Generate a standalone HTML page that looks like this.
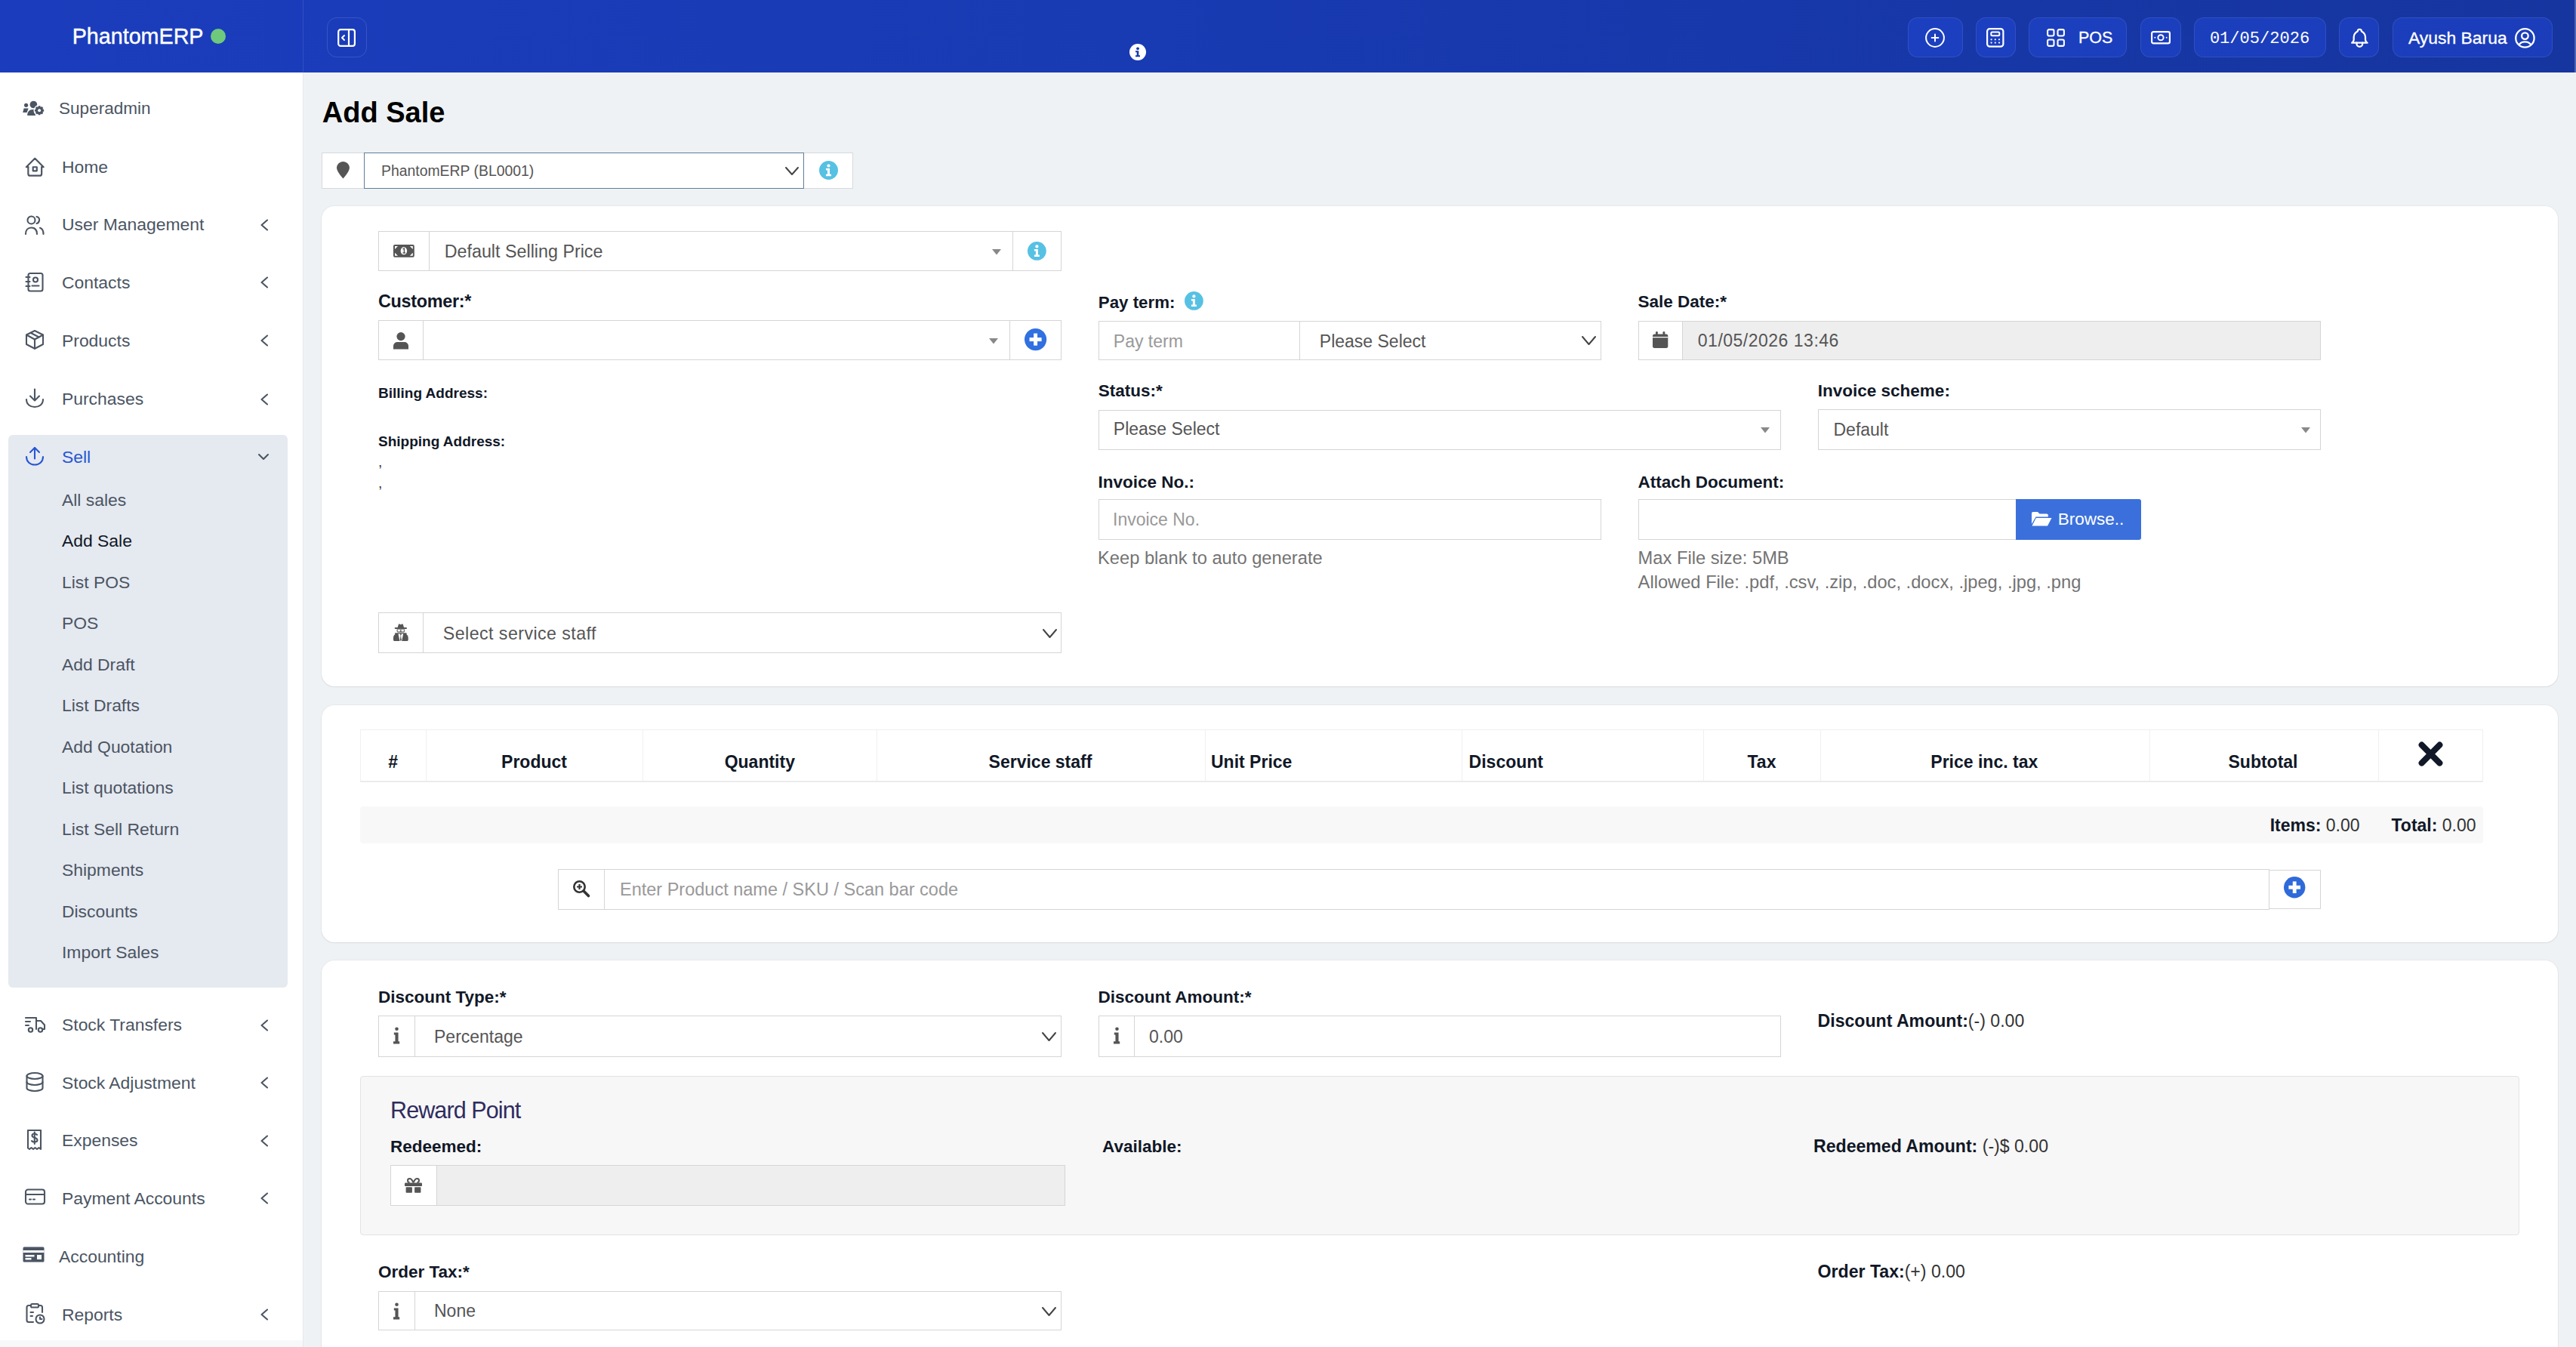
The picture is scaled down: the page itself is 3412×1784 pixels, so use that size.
<!DOCTYPE html><html><head><meta charset="utf-8"><title>Add Sale</title><style>
html,body{margin:0;padding:0;}
@media (max-width:2000px){html{zoom:0.5;}}
body{width:3412px;height:1784px;overflow:hidden;position:relative;background:#eff2f4;font-family:"Liberation Sans",sans-serif;}
.r,.t{position:absolute;}
.t{white-space:nowrap;}
svg.r{overflow:visible;}
</style></head><body>
<div class="r" style="left:0.0px;top:0.0px;width:3412.0px;height:96.0px;background:linear-gradient(90deg,#1b3dbd 0%,#183ab2 45%,#16359f 100%);"></div>
<div class="r" style="left:3410.0px;top:0.0px;width:2.0px;height:96.0px;background:#4e66b3;"></div>
<div class="r" style="left:401.0px;top:0.0px;width:1.0px;height:96.0px;background:rgba(255,255,255,0.10);"></div>
<div class="t" style="left:95.7px;top:33.6px;font-size:28.7px;line-height:28.7px;font-weight:normal;color:#fff;-webkit-text-stroke:0.4px #fff;">PhantomERP</div>
<svg class="r" style="left:278.6px;top:38.0px;" width="20.0" height="20.0" viewBox="0 0 20.0 20"><circle cx="10" cy="10" r="10" fill="#6ec97c"/></svg>
<div class="r" style="left:433.0px;top:22.5px;width:53.0px;height:53.2px;border:1.5px solid rgba(255,255,255,0.13);border-radius:13px;box-sizing:border-box;"></div>
<svg class="r" style="left:446.6px;top:37.7px;" width="24.1" height="24.1" viewBox="0 0 24.099999999999966 24.099999999999994"><rect x="1.2" y="1.2" width="21.7" height="21.7" rx="3" fill="none" stroke="#fff" stroke-width="2.2"/><line x1="15" y1="1.5" x2="15" y2="22.5" stroke="#fff" stroke-width="2.2"/><polyline points="9,9 6,12 9,15" fill="none" stroke="#fff" stroke-width="2" stroke-linecap="round" stroke-linejoin="round"/></svg>
<svg class="r" style="left:1495.5px;top:57.5px;" width="22.0" height="22.0" viewBox="0 0 22.0 22.0"><circle cx="11" cy="11" r="11" fill="#fff"/><circle cx="11" cy="6.3" r="1.9" fill="#173aae"/><path d="M8 9.2 H12.3 V15.2 H14 V17.3 H8 V15.2 H9.7 V11.2 H8 Z" fill="#173aae"/></svg>
<div class="r" style="left:2527.0px;top:23.0px;width:73.0px;height:52.7px;background:rgba(35,75,225,0.42);border:1.5px solid rgba(255,255,255,0.09);border-radius:13px;box-sizing:border-box;"></div>
<div class="r" style="left:2617.0px;top:23.0px;width:53.0px;height:52.7px;background:rgba(35,75,225,0.42);border:1.5px solid rgba(255,255,255,0.09);border-radius:13px;box-sizing:border-box;"></div>
<div class="r" style="left:2687.0px;top:23.0px;width:130.0px;height:52.7px;background:rgba(35,75,225,0.42);border:1.5px solid rgba(255,255,255,0.09);border-radius:13px;box-sizing:border-box;"></div>
<div class="r" style="left:2835.0px;top:23.0px;width:54.0px;height:52.7px;background:rgba(35,75,225,0.42);border:1.5px solid rgba(255,255,255,0.09);border-radius:13px;box-sizing:border-box;"></div>
<div class="r" style="left:2906.0px;top:23.0px;width:175.0px;height:52.7px;background:rgba(35,75,225,0.42);border:1.5px solid rgba(255,255,255,0.09);border-radius:13px;box-sizing:border-box;"></div>
<div class="r" style="left:3098.0px;top:23.0px;width:53.0px;height:52.7px;background:rgba(35,75,225,0.42);border:1.5px solid rgba(255,255,255,0.09);border-radius:13px;box-sizing:border-box;"></div>
<div class="r" style="left:3169.0px;top:23.0px;width:212.0px;height:52.7px;background:rgba(35,75,225,0.42);border:1.5px solid rgba(255,255,255,0.09);border-radius:13px;box-sizing:border-box;"></div>
<svg class="r" style="left:2550.0px;top:37.0px;" width="26.0" height="26.0" viewBox="0 0 26 26"><circle cx="13" cy="13" r="11.9" fill="none" stroke="#fff" stroke-width="2"/><line x1="13" y1="8.6" x2="13" y2="17.4" stroke="#fff" stroke-width="2" stroke-linecap="round"/><line x1="8.6" y1="13" x2="17.4" y2="13" stroke="#fff" stroke-width="2" stroke-linecap="round"/></svg>
<svg class="r" style="left:2631.0px;top:36.9px;" width="23.5" height="25.8" viewBox="0 0 23.5 25.800000000000004"><rect x="1.1" y="1.1" width="21.3" height="23.6" rx="3.5" fill="none" stroke="#fff" stroke-width="2.2"/><rect x="6.3" y="5.6" width="11" height="4.6" rx="1.5" fill="none" stroke="#fff" stroke-width="2"/><g fill="#fff"><circle cx="6.6" cy="15.3" r="1.1"/><circle cx="11.8" cy="15.3" r="1.1"/><circle cx="17" cy="15.3" r="1.1"/><circle cx="6.6" cy="19.6" r="1.1"/><circle cx="11.8" cy="19.6" r="1.1"/><circle cx="17" cy="19.6" r="1.1"/></g></svg>
<svg class="r" style="left:2711.0px;top:38.0px;" width="24.0" height="24.0" viewBox="0 0 24 24"><g fill="none" stroke="#fff" stroke-width="2.1"><rect x="1.1" y="1.1" width="8.4" height="8.4" rx="2"/><rect x="14.5" y="1.1" width="8.4" height="8.4" rx="2"/><rect x="1.1" y="14.5" width="8.4" height="8.4" rx="2"/><rect x="14.5" y="14.5" width="8.4" height="8.4" rx="2"/></g></svg>
<div class="t" style="left:2752.9px;top:39.7px;font-size:21.5px;line-height:21.5px;font-weight:normal;color:#fff;-webkit-text-stroke:0.3px #fff;">POS</div>
<svg class="r" style="left:2849.0px;top:41.2px;" width="26.0" height="17.5" viewBox="0 0 26 17.5"><rect x="1.1" y="1.1" width="23.8" height="15.3" rx="2.2" fill="none" stroke="#fff" stroke-width="2.2"/><circle cx="13" cy="8.75" r="3.6" fill="none" stroke="#fff" stroke-width="2"/><circle cx="5.3" cy="8.75" r="1" fill="#fff"/><circle cx="20.7" cy="8.75" r="1" fill="#fff"/></svg>
<div class="t" style="left:2926.9px;top:41.0px;font-size:22.06px;line-height:22.06px;font-weight:normal;color:#fff;font-family:'Liberation Mono',monospace;font-family:'Liberation Mono',monospace;">01/05/2026</div>
<svg class="r" style="left:3109.7px;top:34.6px" width="30.7" height="30.7" viewBox="0 0 24 24" fill="none" stroke="#fff" stroke-width="1.75" stroke-linecap="round" stroke-linejoin="round"><path d="M10 5a2 2 0 1 1 4 0a7 7 0 0 1 4 6v3a4 4 0 0 0 2 3h-16a4 4 0 0 0 2 -3v-3a7 7 0 0 1 4 -6"/><path d="M9 17v1a3 3 0 0 0 6 0v-1"/></svg>
<div class="t" style="left:3190.0px;top:38.5px;font-size:22.9px;line-height:22.9px;font-weight:normal;color:#fff;-webkit-text-stroke:0.3px #fff;">Ayush Barua</div>
<svg class="r" style="left:3331.4px;top:36.6px;" width="26.8" height="26.8" viewBox="0 0 26.799999999999727 26.799999999999997"><circle cx="13.4" cy="13.4" r="12.2" fill="none" stroke="#fff" stroke-width="2.3"/><circle cx="13.4" cy="10.6" r="4.3" fill="none" stroke="#fff" stroke-width="2.3"/><path d="M5.5 22.2 C7.5 19.3 10 18.3 13.4 18.3 C16.8 18.3 19.3 19.3 21.3 22.2" fill="none" stroke="#fff" stroke-width="2.3"/></svg>
<div class="r" style="left:0.0px;top:96.0px;width:401.0px;height:1688.0px;background:#fff;"></div>
<div class="r" style="left:401.0px;top:96.0px;width:1.0px;height:1688.0px;background:#e6e9ee;"></div>
<div class="r" style="left:0.0px;top:1775.0px;width:401.0px;height:9.0px;background:#f7f8fa;"></div>
<svg class="r" style="left:25px;top:125px" width="40" height="35" viewBox="0 0 40 35"><g fill="#4b5563"><circle cx="9.6" cy="14.3" r="2.6"/><path d="M6.6 18.4 H12.7 L10.6 23.9 H5.2 Z"/><circle cx="19.4" cy="13.5" r="4.8"/><path d="M11.2 27.9 C11.2 22.8 14 20 18.5 20 C20.5 20 22 20.5 23 21.3 L22 27.9 Z"/></g><circle cx="27.1" cy="21.3" r="7.6" fill="#fff"/><path d="M31.86 19.78 L33.15 19.94 L33.15 22.66 L31.86 22.82 L31.72 23.21 L31.54 23.59 L32.34 24.62 L30.42 26.54 L29.39 25.74 L29.01 25.92 L28.62 26.06 L28.46 27.35 L25.74 27.35 L25.58 26.06 L25.19 25.92 L24.81 25.74 L23.78 26.54 L21.86 24.62 L22.66 23.59 L22.48 23.21 L22.34 22.82 L21.05 22.66 L21.05 19.94 L22.34 19.78 L22.48 19.39 L22.66 19.01 L21.86 17.98 L23.78 16.06 L24.81 16.86 L25.19 16.68 L25.58 16.54 L25.74 15.25 L28.46 15.25 L28.62 16.54 L29.01 16.68 L29.39 16.86 L30.42 16.06 L32.34 17.98 L31.54 19.01 L31.72 19.39 Z" fill="#4b5563"/><circle cx="27.1" cy="21.3" r="2" fill="#fff"/></svg>
<div class="t" style="left:78.1px;top:132.8px;font-size:22.5px;line-height:22.5px;font-weight:normal;color:#4b5563;">Superadmin</div>
<svg class="r" style="left:30.8px;top:205.6px" width="30.5" height="30.5" viewBox="0 0 24 24" fill="none" stroke="#4b5563" stroke-width="1.7" stroke-linecap="round" stroke-linejoin="round"><path d="M5 12l-2 0l9 -9l9 9l-2 0"/><path d="M5 12v7a2 2 0 0 0 2 2h10a2 2 0 0 0 2 -2v-7"/><path d="M10 12h4v4h-4z"/></svg>
<div class="t" style="left:82.0px;top:209.6px;font-size:22.9px;line-height:22.9px;font-weight:normal;color:#4b5563;">Home</div>
<div class="t" style="left:82.0px;top:286.3px;font-size:22.9px;line-height:22.9px;font-weight:normal;color:#4b5563;">User Management</div>
<svg class="r" style="left:32px;top:284.7px" width="28" height="28" viewBox="0 0 28 28" fill="none" stroke="#4b5563" stroke-width="2.1" stroke-linecap="round" stroke-linejoin="round"><circle cx="9.5" cy="6.5" r="5"/><path d="M2 25 C2 19.5 5 16.5 9.5 16.5 C14 16.5 17 19.5 17 25"/><path d="M16.5 2 C19.5 2.5 20.5 5 20 7 C19.7 9 18.5 10.5 16.5 11"/><path d="M21 16.8 C24 17.8 25.5 20.5 25.5 25"/></svg>
<svg class="r" style="left:343.0px;top:289.7px;" width="14.0" height="16.0" viewBox="0 0 14 16.0"><polyline points="11,1.5 3.5,8 11,14.5" fill="none" stroke="#4b5563" stroke-width="2.1" stroke-linecap="round" stroke-linejoin="round"/></svg>
<div class="t" style="left:82.0px;top:362.8px;font-size:22.9px;line-height:22.9px;font-weight:normal;color:#4b5563;">Contacts</div>
<svg class="r" style="left:32px;top:360.2px" width="28" height="28" viewBox="0 0 28 28" fill="none" stroke="#4b5563" stroke-width="2.1" stroke-linecap="round" stroke-linejoin="round"><rect x="5.5" y="2" width="19" height="23.5" rx="2.5"/><circle cx="15" cy="10.5" r="3"/><path d="M10.5 18.5 H19.5"/><path d="M2.5 7 H7.5 M2.5 13 H7.5 M2.5 19 H7.5"/></svg>
<svg class="r" style="left:343.0px;top:366.2px;" width="14.0" height="16.0" viewBox="0 0 14 16.0"><polyline points="11,1.5 3.5,8 11,14.5" fill="none" stroke="#4b5563" stroke-width="2.1" stroke-linecap="round" stroke-linejoin="round"/></svg>
<div class="t" style="left:82.0px;top:440.0px;font-size:22.9px;line-height:22.9px;font-weight:normal;color:#4b5563;">Products</div>
<svg class="r" style="left:32px;top:436.4px" width="28" height="28" viewBox="0 0 28 28" fill="none" stroke="#4b5563" stroke-width="2.1" stroke-linecap="round" stroke-linejoin="round"><path d="M14 2 L25 7.5 V20 L14 25.8 L3 20 V7.5 Z"/><path d="M3 7.5 L14 13.5 L25 7.5"/><path d="M14 13.5 V25.8"/><path d="M8.5 4.8 L19.5 10.5"/></svg>
<svg class="r" style="left:343.0px;top:443.4px;" width="14.0" height="16.0" viewBox="0 0 14 16.0"><polyline points="11,1.5 3.5,8 11,14.5" fill="none" stroke="#4b5563" stroke-width="2.1" stroke-linecap="round" stroke-linejoin="round"/></svg>
<div class="t" style="left:82.0px;top:517.2px;font-size:22.9px;line-height:22.9px;font-weight:normal;color:#4b5563;">Purchases</div>
<svg class="r" style="left:32px;top:512.6px" width="28" height="28" viewBox="0 0 28 28" fill="none" stroke="#4b5563" stroke-width="2.1" stroke-linecap="round" stroke-linejoin="round"><path d="M14 2.5 V17"/><path d="M8 11.5 L14 17.5 L20 11.5"/><path d="M3 16 C3 22.5 8 26 14 26 C20 26 25 22.5 25 16"/></svg>
<svg class="r" style="left:343.0px;top:520.6px;" width="14.0" height="16.0" viewBox="0 0 14 16.0"><polyline points="11,1.5 3.5,8 11,14.5" fill="none" stroke="#4b5563" stroke-width="2.1" stroke-linecap="round" stroke-linejoin="round"/></svg>
<div class="r" style="left:11.0px;top:576.0px;width:370.0px;height:732.0px;background:#e5e9f0;border-radius:6px;"></div>
<div class="t" style="left:82.0px;top:594.1px;font-size:22.9px;line-height:22.9px;font-weight:normal;color:#2556d4;">Sell</div>
<svg class="r" style="left:32px;top:589.5px" width="28" height="28" viewBox="0 0 28 28" fill="none" stroke="#2556d4" stroke-width="2.1" stroke-linecap="round" stroke-linejoin="round"><path d="M14 17.5 V3"/><path d="M8 9 L14 3 L20 9"/><path d="M3 15 C3 21.5 8 25.5 14 25.5 C20 25.5 25 21.5 25 15"/></svg>
<svg class="r" style="left:341.0px;top:599.0px;" width="16.0" height="12.0" viewBox="0 0 16 12"><polyline points="2,3 8,9 14,3" fill="none" stroke="#4b5563" stroke-width="2.1" stroke-linecap="round" stroke-linejoin="round"/></svg>
<div class="t" style="left:82.0px;top:650.9px;font-size:22.9px;line-height:22.9px;font-weight:normal;color:#4b5563;">All sales</div>
<div class="t" style="left:82.0px;top:705.4px;font-size:22.9px;line-height:22.9px;font-weight:normal;color:#111827;">Add Sale</div>
<div class="t" style="left:82.0px;top:759.8px;font-size:22.9px;line-height:22.9px;font-weight:normal;color:#4b5563;">List POS</div>
<div class="t" style="left:82.0px;top:814.3px;font-size:22.9px;line-height:22.9px;font-weight:normal;color:#4b5563;">POS</div>
<div class="t" style="left:82.0px;top:868.8px;font-size:22.9px;line-height:22.9px;font-weight:normal;color:#4b5563;">Add Draft</div>
<div class="t" style="left:82.0px;top:923.2px;font-size:22.9px;line-height:22.9px;font-weight:normal;color:#4b5563;">List Drafts</div>
<div class="t" style="left:82.0px;top:977.7px;font-size:22.9px;line-height:22.9px;font-weight:normal;color:#4b5563;">Add Quotation</div>
<div class="t" style="left:82.0px;top:1032.1px;font-size:22.9px;line-height:22.9px;font-weight:normal;color:#4b5563;">List quotations</div>
<div class="t" style="left:82.0px;top:1086.6px;font-size:22.9px;line-height:22.9px;font-weight:normal;color:#4b5563;">List Sell Return</div>
<div class="t" style="left:82.0px;top:1141.1px;font-size:22.9px;line-height:22.9px;font-weight:normal;color:#4b5563;">Shipments</div>
<div class="t" style="left:82.0px;top:1195.5px;font-size:22.9px;line-height:22.9px;font-weight:normal;color:#4b5563;">Discounts</div>
<div class="t" style="left:82.0px;top:1250.0px;font-size:22.9px;line-height:22.9px;font-weight:normal;color:#4b5563;">Import Sales</div>
<div class="t" style="left:82.0px;top:1346.2px;font-size:22.9px;line-height:22.9px;font-weight:normal;color:#4b5563;">Stock Transfers</div>
<svg class="r" style="left:32px;top:1342.6px" width="30" height="28" viewBox="0 0 30 28" fill="none" stroke="#4b5563" stroke-width="2.1" stroke-linecap="round" stroke-linejoin="round"><path d="M2 5 H16 V20"/><path d="M16 9 H22 L27 14.5 V20 H25"/><circle cx="8.5" cy="21" r="2.7"/><circle cx="21.5" cy="21" r="2.7"/><path d="M2 10 H8 M2 15 H6"/></svg>
<svg class="r" style="left:343.0px;top:1349.6px;" width="14.0" height="16.0" viewBox="0 0 14 16.0"><polyline points="11,1.5 3.5,8 11,14.5" fill="none" stroke="#4b5563" stroke-width="2.1" stroke-linecap="round" stroke-linejoin="round"/></svg>
<div class="t" style="left:82.0px;top:1422.5px;font-size:22.9px;line-height:22.9px;font-weight:normal;color:#4b5563;">Stock Adjustment</div>
<svg class="r" style="left:32px;top:1418.9px" width="28" height="28" viewBox="0 0 28 28" fill="none" stroke="#4b5563" stroke-width="2.1" stroke-linecap="round" stroke-linejoin="round"><ellipse cx="14" cy="6" rx="10.5" ry="4"/><path d="M3.5 6 V22 C3.5 24.2 8.2 26 14 26 C19.8 26 24.5 24.2 24.5 22 V6"/><path d="M3.5 14 C3.5 16.2 8.2 18 14 18 C19.8 18 24.5 16.2 24.5 14"/></svg>
<svg class="r" style="left:343.0px;top:1425.9px;" width="14.0" height="16.0" viewBox="0 0 14 16.0"><polyline points="11,1.5 3.5,8 11,14.5" fill="none" stroke="#4b5563" stroke-width="2.1" stroke-linecap="round" stroke-linejoin="round"/></svg>
<div class="t" style="left:82.0px;top:1499.2px;font-size:22.9px;line-height:22.9px;font-weight:normal;color:#4b5563;">Expenses</div>
<svg class="r" style="left:32px;top:1494.6px" width="28" height="30" viewBox="0 0 28 30" fill="none" stroke="#4b5563" stroke-width="2.1" stroke-linecap="round" stroke-linejoin="round"><path d="M5 2 H22 V27 L19.5 25 L17 27 L14.5 25 L12 27 L9.5 25 L7 27 L5 25.5 Z"/><path d="M17 8 C16 6.8 15 6.5 13.5 6.5 C11.5 6.5 10.5 7.7 10.5 9 C10.5 12.5 17.5 11 17.5 15 C17.5 16.5 16 17.5 13.5 17.5 C12 17.5 10.8 17 10 16"/><path d="M13.8 4.5 V20"/></svg>
<svg class="r" style="left:343.0px;top:1502.6px;" width="14.0" height="16.0" viewBox="0 0 14 16.0"><polyline points="11,1.5 3.5,8 11,14.5" fill="none" stroke="#4b5563" stroke-width="2.1" stroke-linecap="round" stroke-linejoin="round"/></svg>
<div class="t" style="left:82.0px;top:1575.9px;font-size:22.9px;line-height:22.9px;font-weight:normal;color:#4b5563;">Payment Accounts</div>
<svg class="r" style="left:32px;top:1573.3px" width="30" height="26" viewBox="0 0 30 26" fill="none" stroke="#4b5563" stroke-width="2.1" stroke-linecap="round" stroke-linejoin="round"><rect x="2" y="2.5" width="25" height="19" rx="3"/><path d="M2 9 H27"/><path d="M7 15.5 H9 M12 15.5 H14"/></svg>
<svg class="r" style="left:343.0px;top:1579.3px;" width="14.0" height="16.0" viewBox="0 0 14 16.0"><polyline points="11,1.5 3.5,8 11,14.5" fill="none" stroke="#4b5563" stroke-width="2.1" stroke-linecap="round" stroke-linejoin="round"/></svg>
<svg class="r" style="left:30px;top:1650.5px" width="30" height="22" viewBox="0 0 30 22"><rect x="0.5" y="0.5" width="28" height="20" rx="1.5" fill="#4b5563"/><rect x="0.5" y="5" width="28" height="3" fill="#fff"/><rect x="3.5" y="11" width="12" height="2.5" fill="#fff"/><rect x="3.5" y="15" width="8" height="2.5" fill="#fff"/><rect x="19" y="11" width="6" height="6" fill="#fff"/></svg>
<div class="t" style="left:78.0px;top:1653.1px;font-size:22.9px;line-height:22.9px;font-weight:normal;color:#4b5563;">Accounting</div>
<div class="t" style="left:82.0px;top:1729.8px;font-size:22.9px;line-height:22.9px;font-weight:normal;color:#4b5563;">Reports</div>
<svg class="r" style="left:32px;top:1725.2px" width="30" height="30" viewBox="0 0 30 30" fill="none" stroke="#4b5563" stroke-width="2.1" stroke-linecap="round" stroke-linejoin="round"><path d="M9 4 H6 C4.5 4 3.5 5 3.5 6.5 V23.5 C3.5 25 4.5 26 6 26 H12"/><path d="M19 4 H21.5 C23 4 24 5 24 6.5 V13"/><rect x="9" y="2" width="10" height="4.5" rx="1.5"/><path d="M8.5 13 H12 M8.5 18 H11"/><circle cx="21" cy="22" r="5.5"/><path d="M21 19.5 V22 H23.5"/></svg>
<svg class="r" style="left:343.0px;top:1733.2px;" width="14.0" height="16.0" viewBox="0 0 14 16.0"><polyline points="11,1.5 3.5,8 11,14.5" fill="none" stroke="#4b5563" stroke-width="2.1" stroke-linecap="round" stroke-linejoin="round"/></svg>
<div class="t" style="left:426.8px;top:129.8px;font-size:38px;line-height:38px;font-weight:bold;color:#000;">Add Sale</div>
<div class="r" style="left:426.0px;top:202.0px;width:57.0px;height:47.5px;background:#fff;border:1px solid #d6d9dd;box-sizing:border-box;"></div>
<div class="r" style="left:1064.0px;top:202.0px;width:65.5px;height:47.5px;background:#fff;border:1px solid #d6d9dd;box-sizing:border-box;"></div>
<div class="r" style="left:482.0px;top:202.0px;width:583.0px;height:47.5px;background:#fff;border:1px solid #5f7f9b;box-sizing:border-box;"></div>
<svg class="r" style="left:445.7px;top:213.5px;" width="16.9" height="22.5" viewBox="0 0 16.900000000000034 22.5"><path d="M8.45 0 C3.8 0 0 3.7 0 8.3 C0 12.5 6 20 8.45 22.5 C10.9 20 16.9 12.5 16.9 8.3 C16.9 3.7 13.1 0 8.45 0 Z" fill="#555"/></svg>
<div class="t" style="left:505.0px;top:216.9px;font-size:19.4px;line-height:19.4px;font-weight:normal;color:#555;">PhantomERP (BL0001)</div>
<svg class="r" style="left:1039.0px;top:219.5px;" width="20.0" height="13.0" viewBox="0 0 20.0 13.0"><polyline points="2,2 10.0,11 18,2" fill="none" stroke="#444" stroke-width="2" stroke-linecap="round" stroke-linejoin="round"/></svg>
<svg class="r" style="left:1084.8px;top:212.8px;" width="25.0" height="25.0" viewBox="0 0 25.0 25.0"><circle cx="12.5" cy="12.5" r="12.5" fill="#57c1e4"/><circle cx="12.5" cy="6.5" r="2.125" fill="#fff"/><path d="M9.0 10.0 H14.000000000000002 V17.75 H16.0 V20.25 H9.0 V17.75 H11.0 V12.5 H9.0 Z" fill="#fff"/></svg>
<div class="r" style="left:426.0px;top:273.0px;width:2962.0px;height:636.0px;background:#fff;border-radius:17px;box-shadow:0 0 0 1px rgba(0,0,0,0.035),0 1px 2px rgba(0,0,0,0.06);"></div>
<div class="r" style="left:426.0px;top:933.5px;width:2962.0px;height:314.5px;background:#fff;border-radius:17px;box-shadow:0 0 0 1px rgba(0,0,0,0.035),0 1px 2px rgba(0,0,0,0.06);"></div>
<div class="r" style="left:426.0px;top:1272.0px;width:2962.0px;height:558.0px;background:#fff;border-radius:17px;box-shadow:0 0 0 1px rgba(0,0,0,0.035),0 1px 2px rgba(0,0,0,0.06);"></div>
<div class="r" style="left:501.0px;top:306.4px;width:905.0px;height:53.1px;background:#fff;border:1px solid #d5d5d5;box-sizing:border-box;"></div>
<div class="r" style="left:568.0px;top:306.4px;width:1.0px;height:53.1px;background:#d5d5d5;"></div>
<div class="r" style="left:1340.5px;top:306.4px;width:1.0px;height:53.1px;background:#d5d5d5;"></div>
<svg class="r" style="left:521.0px;top:324.1px;" width="27.8" height="16.7" viewBox="0 0 27.799999999999955 16.69999999999999"><rect x="0" y="0" width="27.8" height="16.7" rx="2" fill="#555"/><g fill="#fff"><path d="M2 2 H6 L2 6 Z"/><path d="M25.8 2 H21.8 L25.8 6 Z"/><path d="M2 14.7 H6 L2 10.7 Z"/><path d="M25.8 14.7 H21.8 L25.8 10.7 Z"/></g><ellipse cx="13.9" cy="8.35" rx="4.2" ry="5" fill="#fff"/><path d="M12.5 5.8 L14.4 5 V11 M12.5 11 H16" fill="none" stroke="#555" stroke-width="1.4"/></svg>
<div class="t" style="left:588.7px;top:321.5px;font-size:23.3px;line-height:23.3px;font-weight:normal;color:#555;">Default Selling Price</div>
<svg class="r" style="left:1314.0px;top:329.9px;" width="12.0" height="7.5" viewBox="0 0 12.0 7.5"><polygon points="0,0 12,0 6.0,7.5" fill="#888"/></svg>
<svg class="r" style="left:1360.8px;top:319.6px;" width="24.8" height="24.8" viewBox="0 0 24.800000000000182 24.799999999999955"><circle cx="12.4" cy="12.4" r="12.4" fill="#57c1e4"/><circle cx="12.4" cy="6.448" r="2.108" fill="#fff"/><path d="M8.927999999999999 9.920000000000002 H13.888000000000002 V17.608 H15.872000000000002 V20.088 H8.927999999999999 V17.608 H10.912 V12.4 H8.927999999999999 Z" fill="#fff"/></svg>
<div class="t" style="left:501.0px;top:388.2px;font-size:23.4px;line-height:23.4px;font-weight:bold;color:#111827;letter-spacing:-0.3px;">Customer:*</div>
<div class="r" style="left:501.0px;top:424.4px;width:905.0px;height:52.8px;background:#fff;border:1px solid #d5d5d5;box-sizing:border-box;"></div>
<div class="r" style="left:560.0px;top:424.4px;width:1.0px;height:52.8px;background:#d5d5d5;"></div>
<div class="r" style="left:1336.5px;top:424.4px;width:1.0px;height:52.8px;background:#d5d5d5;"></div>
<svg class="r" style="left:520.8px;top:439.6px;" width="20.0" height="22.4" viewBox="0 0 20.0 22.399999999999977"><circle cx="10" cy="5.6" r="5.6" fill="#555"/><path d="M0 22.4 V18.5 C0 15 2.5 13 6 13 H14 C17.5 13 20 15 20 18.5 V22.4 Z" fill="#555"/></svg>
<svg class="r" style="left:1310.4px;top:448.2px;" width="12.0" height="7.5" viewBox="0 0 12.0 7.5"><polygon points="0,0 12,0 6.0,7.5" fill="#888"/></svg>
<svg class="r" style="left:1356.6px;top:435.0px;" width="29.2" height="29.2" viewBox="0 0 29.199999999999818 29.200000000000045"><circle cx="14.6" cy="14.6" r="14.6" fill="#3070e0"/><rect x="6.57" y="12.117999999999999" width="16.060000000000002" height="4.964" fill="#fff"/><rect x="12.117999999999999" y="6.57" width="4.964" height="16.060000000000002" fill="#fff"/></svg>
<div class="t" style="left:1454.8px;top:389.5px;font-size:22.3px;line-height:22.3px;font-weight:bold;color:#111827;">Pay term:</div>
<svg class="r" style="left:1568.6px;top:386.2px;" width="24.8" height="24.8" viewBox="0 0 24.800000000000182 24.799999999999955"><circle cx="12.4" cy="12.4" r="12.4" fill="#57c1e4"/><circle cx="12.4" cy="6.448" r="2.108" fill="#fff"/><path d="M8.927999999999999 9.920000000000002 H13.888000000000002 V17.608 H15.872000000000002 V20.088 H8.927999999999999 V17.608 H10.912 V12.4 H8.927999999999999 Z" fill="#fff"/></svg>
<div class="r" style="left:1454.5px;top:424.6px;width:267.0px;height:52.8px;background:#fff;border:1px solid #d5d5d5;box-sizing:border-box;"></div>
<div class="r" style="left:1720.5px;top:424.6px;width:400.5px;height:52.8px;background:#fff;border:1px solid #d5d5d5;box-sizing:border-box;"></div>
<div class="t" style="left:1474.8px;top:440.5px;font-size:23px;line-height:23px;font-weight:normal;color:#999;">Pay term</div>
<div class="t" style="left:1747.8px;top:440.5px;font-size:23px;line-height:23px;font-weight:normal;color:#555;">Please Select</div>
<svg class="r" style="left:2094.1px;top:444.3px;" width="21.0" height="14.0" viewBox="0 0 21.0 14.0"><polyline points="2,2 10.5,12 19,2" fill="none" stroke="#444" stroke-width="2" stroke-linecap="round" stroke-linejoin="round"/></svg>
<div class="t" style="left:2169.5px;top:389.0px;font-size:22.5px;line-height:22.5px;font-weight:bold;color:#111827;">Sale Date:*</div>
<div class="r" style="left:2169.5px;top:424.6px;width:904.5px;height:52.8px;background:#fff;border:1px solid #d5d5d5;box-sizing:border-box;"></div>
<div class="r" style="left:2229.0px;top:425.6px;width:844.0px;height:50.8px;background:#eee;"></div>
<div class="r" style="left:2228.2px;top:424.6px;width:1.0px;height:52.8px;background:#d5d5d5;"></div>
<svg class="r" style="left:2188.7px;top:439.4px;" width="20.3" height="22.1" viewBox="0 0 20.300000000000182 22.100000000000023"><rect x="0" y="3.5" width="20.3" height="18.6" rx="2.5" fill="#555"/><rect x="4" y="0" width="2.8" height="6" rx="1.2" fill="#555"/><rect x="13.5" y="0" width="2.8" height="6" rx="1.2" fill="#555"/><rect x="0" y="7" width="20.3" height="1.2" fill="#fff"/></svg>
<div class="t" style="left:2248.8px;top:440.2px;font-size:23px;line-height:23px;font-weight:normal;color:#555;letter-spacing:0.5px;">01/05/2026 13:46</div>
<div class="t" style="left:1454.8px;top:507.4px;font-size:22.5px;line-height:22.5px;font-weight:bold;color:#111827;">Status:*</div>
<div class="r" style="left:1454.5px;top:542.6px;width:904.5px;height:53.8px;background:#fff;border:1px solid #d5d5d5;box-sizing:border-box;"></div>
<div class="t" style="left:1474.8px;top:557.0px;font-size:23px;line-height:23px;font-weight:normal;color:#555;">Please Select</div>
<svg class="r" style="left:2332.2px;top:566.0px;" width="12.0" height="7.5" viewBox="0 0 12.0 7.5"><polygon points="0,0 12,0 6.0,7.5" fill="#888"/></svg>
<div class="t" style="left:2407.8px;top:507.0px;font-size:22.5px;line-height:22.5px;font-weight:bold;color:#111827;">Invoice scheme:</div>
<div class="r" style="left:2407.8px;top:542.2px;width:666.2px;height:54.2px;background:#fff;border:1px solid #d5d5d5;box-sizing:border-box;"></div>
<div class="t" style="left:2428.5px;top:558.2px;font-size:23px;line-height:23px;font-weight:normal;color:#555;">Default</div>
<svg class="r" style="left:3047.7px;top:566.0px;" width="12.0" height="7.5" viewBox="0 0 12.0 7.5"><polygon points="0,0 12,0 6.0,7.5" fill="#888"/></svg>
<div class="t" style="left:501.0px;top:510.7px;font-size:19px;line-height:19px;font-weight:bold;color:#111827;">Billing Address:</div>
<div class="t" style="left:501.0px;top:574.9px;font-size:19px;line-height:19px;font-weight:bold;color:#111827;">Shipping Address:</div>
<div class="t" style="left:501.0px;top:601.9px;font-size:19px;line-height:19px;font-weight:normal;color:#333;">,</div>
<div class="t" style="left:501.0px;top:629.9px;font-size:19px;line-height:19px;font-weight:normal;color:#333;">,</div>
<div class="t" style="left:1454.5px;top:627.5px;font-size:22.5px;line-height:22.5px;font-weight:bold;color:#111827;">Invoice No.:</div>
<div class="r" style="left:1454.5px;top:661.2px;width:666.5px;height:53.6px;background:#fff;border:1px solid #d5d5d5;box-sizing:border-box;"></div>
<div class="t" style="left:1474.0px;top:676.9px;font-size:23px;line-height:23px;font-weight:normal;color:#999;">Invoice No.</div>
<div class="t" style="left:1454.0px;top:728.4px;font-size:23.7px;line-height:23.7px;font-weight:normal;color:#737373;">Keep blank to auto generate</div>
<div class="t" style="left:2169.6px;top:627.5px;font-size:22.5px;line-height:22.5px;font-weight:bold;color:#111827;">Attach Document:</div>
<div class="r" style="left:2169.5px;top:661.2px;width:501.5px;height:53.6px;background:#fff;border:1px solid #d5d5d5;box-sizing:border-box;"></div>
<div class="r" style="left:2670.0px;top:661.2px;width:165.7px;height:53.6px;background:#3b70dc;border-radius:0 3px 3px 0;"></div>
<svg class="r" style="left:2690.0px;top:677.0px;" width="28.3" height="20.0" viewBox="0 0 28.300000000000182 20"><path d="M1 3 C1 1.8 1.8 1 3 1 H9 L11.5 3.5 H21 C22 3.5 22.8 4.3 22.8 5.3 V7.5 H6.5 L1 17 Z" fill="#fff"/><path d="M6.8 9 H27.5 L22 19.5 H1.5 Z" fill="#fff"/></svg>
<div class="t" style="left:2725.7px;top:677.4px;font-size:22.5px;line-height:22.5px;font-weight:normal;color:#fff;">Browse..</div>
<div class="t" style="left:2169.6px;top:728.4px;font-size:23.7px;line-height:23.7px;font-weight:normal;color:#737373;">Max File size: 5MB</div>
<div class="t" style="left:2169.6px;top:759.9px;font-size:23.7px;line-height:23.7px;font-weight:normal;color:#737373;">Allowed File: .pdf, .csv, .zip, .doc, .docx, .jpeg, .jpg, .png</div>
<div class="r" style="left:501.0px;top:811.0px;width:905.0px;height:54.2px;background:#fff;border:1px solid #d5d5d5;box-sizing:border-box;"></div>
<div class="r" style="left:560.4px;top:811.0px;width:1.0px;height:54.2px;background:#d5d5d5;"></div>
<svg class="r" style="left:521.0px;top:826.1px;" width="19.7" height="22.9" viewBox="0 0 19.700000000000045 22.899999999999977"><g fill="#555"><path d="M5.6 5.2 L6.9 0.9 C7.1 0.3 7.6 0.1 8.1 0.4 L9.85 1.3 L11.6 0.4 C12.1 0.1 12.6 0.3 12.8 0.9 L14.1 5.2 Z"/><rect x="1.7" y="4.9" width="16.3" height="2" rx="1"/><path d="M4.6 7.6 H15.1 V9.8 C15.1 11 14.2 11.6 13.1 11.6 H6.6 C5.5 11.6 4.6 11 4.6 9.8 Z"/><path d="M2.2 12.2 H17.5 V14.2 C19 15.2 19.7 16.8 19.7 18.6 V21.6 C19.7 22.4 19.2 22.9 18.4 22.9 H1.3 C0.5 22.9 0 22.4 0 21.6 V18.6 C0 16.8 0.7 15.2 2.2 14.2 Z"/></g><g fill="#fff"><ellipse cx="7.4" cy="9.3" rx="1.9" ry="1.2"/><ellipse cx="12.3" cy="9.3" rx="1.9" ry="1.2"/><path d="M6.5 13.5 H8.8 L9.85 16 L10.9 13.5 H13.2 L11.2 22.9 H8.5 Z"/></g><path d="M9.85 14.2 L10.8 21.5 L9.85 22.9 L8.9 21.5 Z" fill="#555"/></svg>
<div class="t" style="left:586.8px;top:827.6px;font-size:23.2px;line-height:23.2px;font-weight:normal;color:#555;letter-spacing:0.45px;">Select service staff</div>
<svg class="r" style="left:1379.9px;top:831.6px;" width="21.0" height="14.0" viewBox="0 0 21.0 14.0"><polyline points="2,2 10.5,12 19,2" fill="none" stroke="#444" stroke-width="2" stroke-linecap="round" stroke-linejoin="round"/></svg>
<div class="r" style="left:477.0px;top:966.0px;width:2811.5px;height:69.5px;border:1px solid #f0f0f0;border-bottom:2px solid #ebebeb;box-sizing:border-box;"></div>
<div class="r" style="left:564.0px;top:966.0px;width:1.0px;height:68.0px;background:#f0f0f0;"></div>
<div class="r" style="left:851.3px;top:966.0px;width:1.0px;height:68.0px;background:#f0f0f0;"></div>
<div class="r" style="left:1161.4px;top:966.0px;width:1.0px;height:68.0px;background:#f0f0f0;"></div>
<div class="r" style="left:1595.6px;top:966.0px;width:1.0px;height:68.0px;background:#f0f0f0;"></div>
<div class="r" style="left:1936.3px;top:966.0px;width:1.0px;height:68.0px;background:#f0f0f0;"></div>
<div class="r" style="left:2256.4px;top:966.0px;width:1.0px;height:68.0px;background:#f0f0f0;"></div>
<div class="r" style="left:2411.4px;top:966.0px;width:1.0px;height:68.0px;background:#f0f0f0;"></div>
<div class="r" style="left:2846.7px;top:966.0px;width:1.0px;height:68.0px;background:#f0f0f0;"></div>
<div class="r" style="left:3150.4px;top:966.0px;width:1.0px;height:68.0px;background:#f0f0f0;"></div>
<div class="t" style="left:-479.4px;width:2000px;text-align:center;top:998.3px;font-size:23px;line-height:23px;font-weight:bold;color:#111827;">#</div>
<div class="t" style="left:-292.5px;width:2000px;text-align:center;top:998.3px;font-size:23px;line-height:23px;font-weight:bold;color:#111827;">Product</div>
<div class="t" style="left:6.3px;width:2000px;text-align:center;top:998.3px;font-size:23px;line-height:23px;font-weight:bold;color:#111827;">Quantity</div>
<div class="t" style="left:378.0px;width:2000px;text-align:center;top:998.3px;font-size:23px;line-height:23px;font-weight:bold;color:#111827;">Service staff</div>
<div class="t" style="left:1604.0px;top:998.3px;font-size:23px;line-height:23px;font-weight:bold;color:#111827;">Unit Price</div>
<div class="t" style="left:1945.6px;top:998.3px;font-size:23px;line-height:23px;font-weight:bold;color:#111827;">Discount</div>
<div class="t" style="left:1333.5px;width:2000px;text-align:center;top:998.3px;font-size:23px;line-height:23px;font-weight:bold;color:#111827;">Tax</div>
<div class="t" style="left:1628.3px;width:2000px;text-align:center;top:998.3px;font-size:23px;line-height:23px;font-weight:bold;color:#111827;">Price inc. tax</div>
<div class="t" style="left:1997.5px;width:2000px;text-align:center;top:998.3px;font-size:23px;line-height:23px;font-weight:bold;color:#111827;">Subtotal</div>
<svg class="r" style="left:3203.0px;top:982.3px;" width="33.0" height="33.2" viewBox="0 0 33 33.200000000000045"><path d="M4.6 4.6 L28.4 28.6 M28.4 4.6 L4.6 28.6" stroke="#111827" stroke-width="8" stroke-linecap="round"/></svg>
<div class="r" style="left:477.0px;top:1068.0px;width:2811.5px;height:49.2px;background:#f8f8f8;border-radius:4px;"></div>
<div class="t" style="left:3006.7px;top:1081.9px;font-size:23px;line-height:23px;font-weight:normal;color:#333;"><b style="color:#111827">Items:</b> 0.00</div>
<div class="t" style="left:3167.5px;top:1081.9px;font-size:23px;line-height:23px;font-weight:normal;color:#333;"><b style="color:#111827">Total:</b> 0.00</div>
<div class="r" style="left:739.0px;top:1151.0px;width:62.0px;height:53.5px;background:#fff;border:1px solid #d5d5d5;box-sizing:border-box;"></div>
<div class="r" style="left:800.0px;top:1151.0px;width:2205.5px;height:53.5px;background:#fff;border:1px solid #d5d5d5;box-sizing:border-box;"></div>
<div class="r" style="left:3004.6px;top:1151.5px;width:69.4px;height:52.5px;background:#fff;border:1px solid #d5d5d5;box-sizing:border-box;"></div>
<svg class="r" style="left:759.4px;top:1165.8px;" width="21.8" height="22.4" viewBox="0 0 21.800000000000068 22.40000000000009"><circle cx="8.5" cy="8.5" r="7.2" fill="none" stroke="#333" stroke-width="2.6"/><path d="M8.5 5 V12 M5 8.5 H12" stroke="#333" stroke-width="2.2"/><path d="M14 14 L20.5 20.5" stroke="#333" stroke-width="3.6" stroke-linecap="round"/></svg>
<div class="t" style="left:821.0px;top:1166.8px;font-size:23.5px;line-height:23.5px;font-weight:normal;color:#999;">Enter Product name / SKU / Scan bar code</div>
<svg class="r" style="left:3025.2px;top:1161.2px;" width="28.4" height="28.4" viewBox="0 0 28.399999999999636 28.40000000000009"><circle cx="14.2" cy="14.2" r="14.2" fill="#2f6ad9"/><rect x="6.39" y="11.786" width="15.620000000000001" height="4.828" fill="#fff"/><rect x="11.786" y="6.39" width="4.828" height="15.620000000000001" fill="#fff"/></svg>
<div class="t" style="left:501.0px;top:1310.4px;font-size:22.5px;line-height:22.5px;font-weight:bold;color:#111827;">Discount Type:*</div>
<div class="r" style="left:501.0px;top:1345.3px;width:905.0px;height:54.5px;background:#fff;border:1px solid #d5d5d5;box-sizing:border-box;"></div>
<div class="r" style="left:549.2px;top:1345.3px;width:1.0px;height:54.5px;background:#d5d5d5;"></div>
<svg class="r" style="left:521.0px;top:1360.3px;" width="8.2" height="22.4" viewBox="0 0 8.200000000000045 22.40000000000009"><circle cx="4.5100000000000255" cy="2.688000000000011" r="2.296000000000013" fill="#555"/><path d="M0.8200000000000046 7.3920000000000305 H6.560000000000037 V19.264000000000078 H8.200000000000045 V22.40000000000009 H0 V19.264000000000078 H2.4600000000000137 V10.528000000000041 H0.8200000000000046 Z" fill="#555"/></svg>
<div class="t" style="left:575.0px;top:1362.1px;font-size:23px;line-height:23px;font-weight:normal;color:#555;">Percentage</div>
<svg class="r" style="left:1378.7px;top:1365.9px;" width="21.0" height="14.0" viewBox="0 0 21.0 14.0"><polyline points="2,2 10.5,12 19,2" fill="none" stroke="#444" stroke-width="2" stroke-linecap="round" stroke-linejoin="round"/></svg>
<div class="t" style="left:1454.5px;top:1310.4px;font-size:22.5px;line-height:22.5px;font-weight:bold;color:#111827;">Discount Amount:*</div>
<div class="r" style="left:1454.5px;top:1345.3px;width:904.5px;height:54.5px;background:#fff;border:1px solid #d5d5d5;box-sizing:border-box;"></div>
<div class="r" style="left:1502.2px;top:1345.3px;width:1.0px;height:54.5px;background:#d5d5d5;"></div>
<svg class="r" style="left:1474.5px;top:1360.3px;" width="8.2" height="22.4" viewBox="0 0 8.200000000000045 22.40000000000009"><circle cx="4.5100000000000255" cy="2.688000000000011" r="2.296000000000013" fill="#555"/><path d="M0.8200000000000046 7.3920000000000305 H6.560000000000037 V19.264000000000078 H8.200000000000045 V22.40000000000009 H0 V19.264000000000078 H2.4600000000000137 V10.528000000000041 H0.8200000000000046 Z" fill="#555"/></svg>
<div class="t" style="left:1522.0px;top:1362.1px;font-size:23px;line-height:23px;font-weight:normal;color:#555;">0.00</div>
<div class="t" style="left:2407.6px;top:1341.3px;font-size:23.1px;line-height:23.1px;font-weight:normal;color:#333;"><b style="color:#111827">Discount Amount:</b>(-) 0.00</div>
<div class="r" style="left:477.0px;top:1424.8px;width:2859.5px;height:211.2px;background:#f7f7f7;border:1px solid #e3e3e3;border-radius:4px;box-sizing:border-box;"></div>
<div class="t" style="left:517.0px;top:1455.2px;font-size:30.5px;line-height:30.5px;font-weight:normal;color:#2f2c5e;letter-spacing:-0.9px;">Reward Point</div>
<div class="t" style="left:517.0px;top:1508.2px;font-size:22.5px;line-height:22.5px;font-weight:bold;color:#111827;">Redeemed:</div>
<div class="r" style="left:517.0px;top:1543.0px;width:894.0px;height:53.5px;background:#fff;border:1px solid #d5d5d5;box-sizing:border-box;"></div>
<div class="r" style="left:578.5px;top:1544.0px;width:831.5px;height:51.5px;background:#eee;"></div>
<div class="r" style="left:578.0px;top:1543.0px;width:1.0px;height:53.5px;background:#d5d5d5;"></div>
<svg class="r" style="left:536.0px;top:1559.7px;" width="23.0" height="19.8" viewBox="0 0 23 19.799999999999955"><g fill="#555"><rect x="0" y="6.5" width="23" height="4.6" rx="1.2"/><rect x="1.6" y="12.3" width="8.3" height="7.5" rx="0.8"/><rect x="13.1" y="12.3" width="8.3" height="7.5" rx="0.8"/></g><g fill="none" stroke="#555" stroke-width="2"><path d="M11.5 6.3 C10 2.5 8.5 1 6.5 1 C4.8 1 4 2.3 4 3.5 C4 5 5 6 6.5 6.3"/><path d="M11.5 6.3 C13 2.5 14.5 1 16.5 1 C18.2 1 19 2.3 19 3.5 C19 5 18 6 16.5 6.3"/></g></svg>
<div class="t" style="left:1460.0px;top:1508.2px;font-size:22.5px;line-height:22.5px;font-weight:bold;color:#111827;">Available:</div>
<div class="t" style="left:2402.0px;top:1507.4px;font-size:23.1px;line-height:23.1px;font-weight:normal;color:#333;"><b style="color:#111827">Redeemed Amount:</b> (-)$ 0.00</div>
<div class="t" style="left:501.0px;top:1674.0px;font-size:22.5px;line-height:22.5px;font-weight:bold;color:#111827;">Order Tax:*</div>
<div class="r" style="left:501.0px;top:1709.6px;width:905.0px;height:52.4px;background:#fff;border:1px solid #d5d5d5;box-sizing:border-box;"></div>
<div class="r" style="left:549.2px;top:1709.6px;width:1.0px;height:52.4px;background:#d5d5d5;"></div>
<svg class="r" style="left:521.0px;top:1724.5px;" width="8.2" height="22.4" viewBox="0 0 8.200000000000045 22.40000000000009"><circle cx="4.5100000000000255" cy="2.688000000000011" r="2.296000000000013" fill="#555"/><path d="M0.8200000000000046 7.3920000000000305 H6.560000000000037 V19.264000000000078 H8.200000000000045 V22.40000000000009 H0 V19.264000000000078 H2.4600000000000137 V10.528000000000041 H0.8200000000000046 Z" fill="#555"/></svg>
<div class="t" style="left:575.0px;top:1724.8px;font-size:23px;line-height:23px;font-weight:normal;color:#555;">None</div>
<svg class="r" style="left:1378.7px;top:1730.0px;" width="21.0" height="14.0" viewBox="0 0 21.0 14.0"><polyline points="2,2 10.5,12 19,2" fill="none" stroke="#444" stroke-width="2" stroke-linecap="round" stroke-linejoin="round"/></svg>
<div class="t" style="left:2407.6px;top:1672.8px;font-size:23.1px;line-height:23.1px;font-weight:normal;color:#333;"><b style="color:#111827">Order Tax:</b>(+) 0.00</div>
</body></html>
